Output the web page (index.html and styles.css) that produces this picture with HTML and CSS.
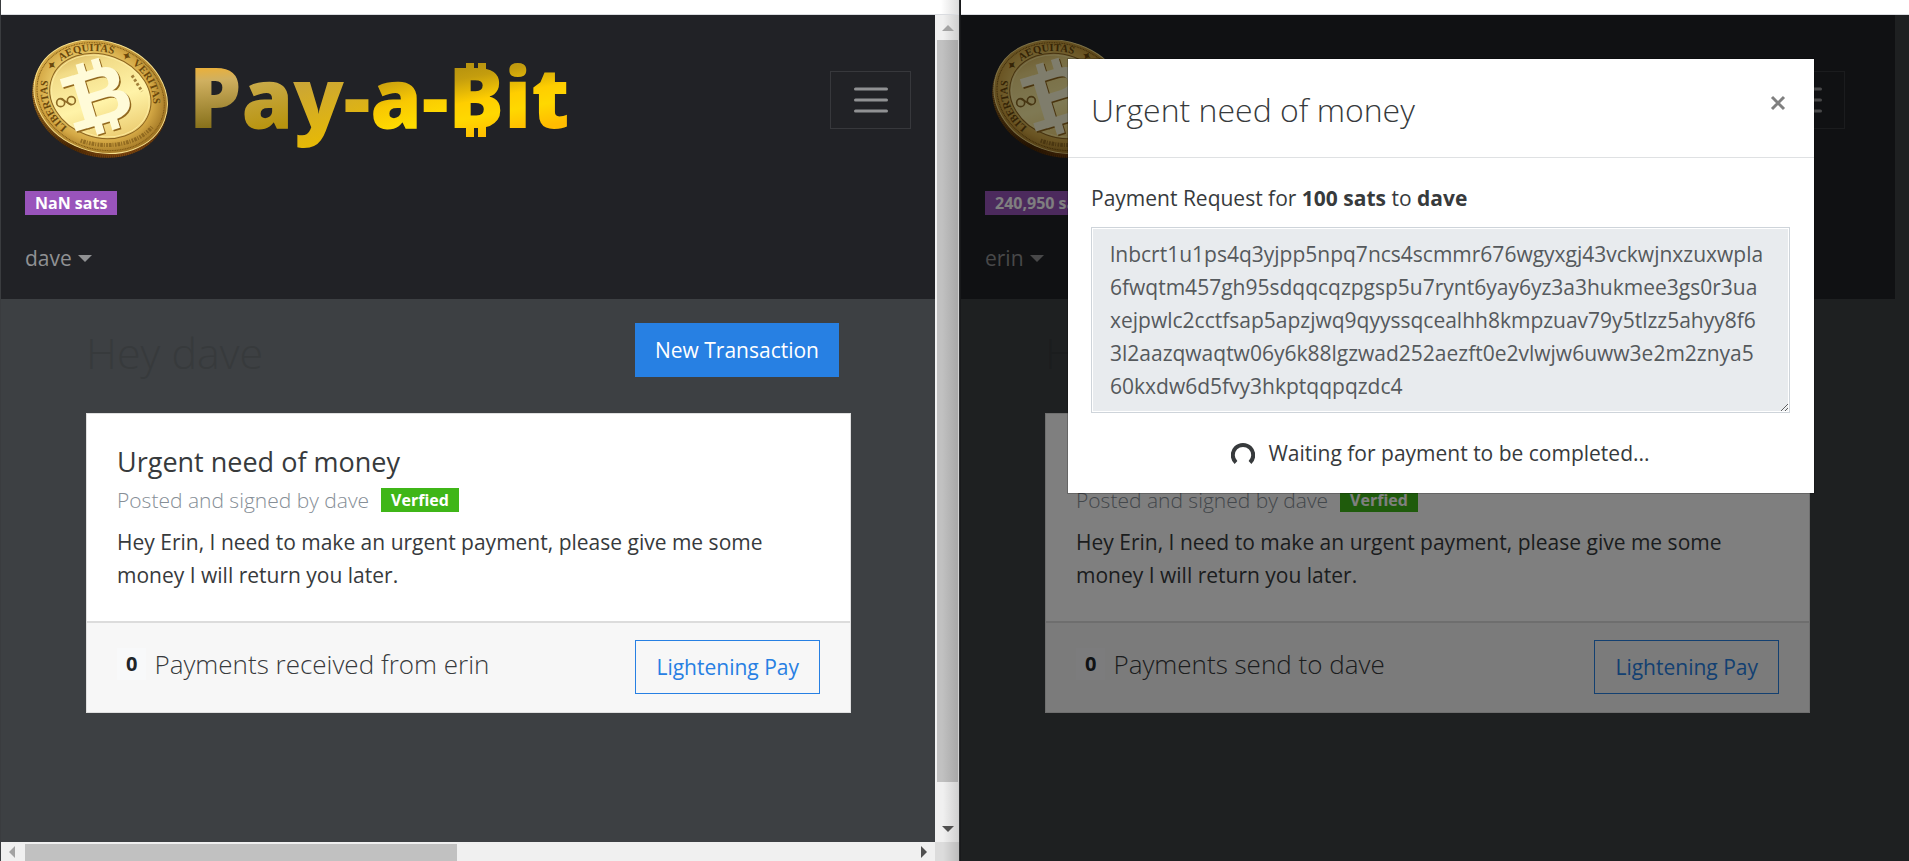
FILE: index.html
```html
<!DOCTYPE html>
<html lang="en">
<head>
<meta charset="utf-8">
<title>Pay-a-Bit</title>
<link rel="stylesheet" href="styles.css">
</head>
<body>
<svg class="defs" width="0" height="0" aria-hidden="true">
  <defs>
    <radialGradient id="face" cx="45%" cy="48%" r="58%">
      <stop offset="0" stop-color="#fff6b4"/>
      <stop offset=".45" stop-color="#f3d878"/>
      <stop offset=".75" stop-color="#d3a744"/>
      <stop offset="1" stop-color="#94691c"/>
    </radialGradient>
    <linearGradient id="inner" x1="0" y1="0" x2="1" y2="1">
      <stop offset="0" stop-color="#c79b3c"/>
      <stop offset=".25" stop-color="#f2dc88"/>
      <stop offset=".55" stop-color="#fff3a8"/>
      <stop offset="1" stop-color="#e3bb58"/>
    </linearGradient>
    <linearGradient id="edge" x1="0" y1="0" x2="1" y2="1">
      <stop offset="0" stop-color="#f4dd84"/>
      <stop offset=".35" stop-color="#a87423"/>
      <stop offset=".7" stop-color="#4a2703"/>
      <stop offset="1" stop-color="#b3661a"/>
    </linearGradient>
    <linearGradient id="gold-p" gradientUnits="userSpaceOnUse" x1="0" y1="20" x2="4" y2="80">
      <stop offset="0" stop-color="#e9b03c"/>
      <stop offset=".2" stop-color="#d0b060"/>
      <stop offset="1" stop-color="#86701a"/>
    </linearGradient>
    <linearGradient id="gold-a" gradientUnits="userSpaceOnUse" x1="60" y1="34" x2="70" y2="80">
      <stop offset="0" stop-color="#c9aa48"/>
      <stop offset="1" stop-color="#b8940f"/>
    </linearGradient>
    <linearGradient id="gold-y" gradientUnits="userSpaceOnUse" x1="100" y1="30" x2="120" y2="96">
      <stop offset="0" stop-color="#c8a43a"/>
      <stop offset="1" stop-color="#e6b906"/>
    </linearGradient>
    <linearGradient id="gold-mid" gradientUnits="userSpaceOnUse" x1="190" y1="32" x2="204" y2="80">
      <stop offset="0" stop-color="#c9a010"/>
      <stop offset=".5" stop-color="#f8c802"/>
      <stop offset="1" stop-color="#ffdc00"/>
    </linearGradient>
    <linearGradient id="gold-bit" gradientUnits="userSpaceOnUse" x1="300" y1="12" x2="314" y2="84">
      <stop offset="0" stop-color="#b8940f"/>
      <stop offset=".15" stop-color="#c49d0e"/>
      <stop offset=".48" stop-color="#ffce00"/>
      <stop offset=".7" stop-color="#ffd800"/>
      <stop offset="1" stop-color="#ffbc00"/>
    </linearGradient>
    <path id="ring" d="M147 295 A162 131 20 1 1 393 253"/>
    <symbol id="coin" viewBox="33 30 414 354">
      <ellipse cx="240" cy="207" rx="207" ry="172" transform="rotate(20 240 207)" fill="url(#edge)"/>
      <ellipse cx="240" cy="207" rx="204" ry="169" transform="rotate(20 240 207)" fill="none" stroke="#2f1a04" stroke-opacity=".5" stroke-width="7" stroke-dasharray="2 4"/>
      <ellipse cx="242" cy="200" rx="204" ry="165" transform="rotate(20 242 200)" fill="url(#face)" stroke="#f5df8c" stroke-width="3"/>
      <ellipse cx="242" cy="200" rx="195" ry="157" transform="rotate(20 242 200)" fill="none" stroke="#7a5512" stroke-width="3" stroke-dasharray="3 2"/>
      <ellipse cx="241" cy="198" rx="155" ry="124" transform="rotate(20 241 198)" fill="url(#inner)" stroke="#8b6420" stroke-width="3"/>
      <ellipse cx="241" cy="198" rx="150" ry="119" transform="rotate(20 241 198)" fill="none" stroke="#fff0a8" stroke-width="2"/>
      <text class="ring-text"><textPath href="#ring" startOffset="1%">LIBERTAS</textPath></text>
      <text class="ring-text"><textPath href="#ring" startOffset="31%">✦</textPath></text>
      <text class="ring-text"><textPath href="#ring" startOffset="37%">AEQUITAS</textPath></text>
      <text class="ring-text"><textPath href="#ring" startOffset="67%">✦</textPath></text>
      <text class="ring-text"><textPath href="#ring" startOffset="73%">VERITAS</textPath></text>
      <path d="M182 332 C250 356 350 350 398 288" fill="none" stroke="#7a5414" stroke-width="12" stroke-dasharray="5 3 8 3 3 4" stroke-opacity=".65"/>
      <path d="M336 136 L366 184" fill="none" stroke="#8b6420" stroke-width="9" stroke-dasharray="8 6" stroke-opacity=".8"/>
      <g fill="none" stroke="#8f6c26" stroke-width="5">
        <circle cx="122" cy="218" r="12"/><circle cx="154" cy="212" r="12"/><path d="M122 206 L154 224"/>
      </g>
      <g transform="translate(243 196) rotate(-17)">
        <g class="mark-shadow" transform="translate(3 5)">
          <text class="mark" x="-84" y="82">B</text>
          <path d="M-104 -82h40v26h-40zM-104 56h40v26h-40zM-46 -110h24v32h-24zM2 -110h24v32H2zM-46 78h24v32h-24zM2 78h24v32H2z"/>
        </g>
        <g class="mark-face">
          <text class="mark" x="-84" y="82">B</text>
          <path d="M-104 -82h40v26h-40zM-104 56h40v26h-40zM-46 -110h24v32h-24zM2 -110h24v32H2zM-46 78h24v32h-24zM2 78h24v32H2z"/>
        </g>
      </g>
    </symbol>
    <symbol id="wordmark" viewBox="0 0 374 100">
      <text class="word" x="-6" y="79"><tspan fill="url(#gold-p)">P</tspan><tspan fill="url(#gold-a)">a</tspan><tspan fill="url(#gold-y)">y-</tspan><tspan fill="url(#gold-mid)">a-</tspan><tspan fill="url(#gold-bit)">Bit</tspan></text>
      <path fill="url(#gold-bit)" d="M271 14h8v10h-8zM283 14h8v10h-8zM271 77h8v11h-8zM283 77h8v11h-8z"/>
    </symbol>
  </defs>
</svg>

<main class="desktop">
  <section class="window window-left">
    <div class="strip"></div>
    <div class="view">
      <header class="navbar">
        <div class="navbar-top">
          <a class="brand" href="#" aria-label="Pay-a-Bit">
            <svg class="coin"><use href="#coin"/></svg>
            <svg class="wordmark"><use href="#wordmark"/></svg>
          </a>
          <button class="toggler" type="button" aria-label="Toggle navigation">
            <svg viewBox="0 0 34 34"><path d="M1.500 6h31M1.500 17h31M1.500 28h31"/></svg>
          </button>
        </div>
        <div class="balance"><span class="badge badge-purple">NaN sats</span></div>
        <a class="user" href="#">dave<span class="caret"></span></a>
      </header>
      <div class="container">
        <div class="heading">
          <h1>Hey dave</h1>
          <button class="btn btn-primary" type="button">New Transaction</button>
        </div>
        <article class="card">
          <div class="card-body">
            <h4>Urgent need of money</h4>
            <div class="byline"><span>Posted and signed by dave</span><span class="badge badge-green">Verfied</span></div>
            <p>Hey Erin, I need to make an urgent payment, please give me some money I will return you later.</p>
          </div>
          <div class="card-footer">
            <div class="count"><span class="count-badge">0</span><span>Payments received from erin</span></div>
            <button class="btn btn-outline" type="button">Lightening Pay</button>
          </div>
        </article>
      </div>
    </div>
    <div class="vbar"><i class="up"></i><i class="vthumb"></i><i class="vspace"></i><i class="down"></i></div>
    <div class="hbar"><i class="left"></i><i class="hthumb"></i><i class="hspace"></i><i class="right"></i></div>
    <div class="corner"></div>
  </section>

  <section class="window window-right">
    <div class="strip"></div>
    <div class="view">
      <header class="navbar">
        <div class="navbar-top">
          <a class="brand" href="#" aria-label="Pay-a-Bit">
            <svg class="coin"><use href="#coin"/></svg>
          </a>
          <button class="toggler" type="button" aria-label="Toggle navigation">
            <svg viewBox="0 0 34 34"><path d="M1.500 6h31M1.500 17h31M1.500 28h31"/></svg>
          </button>
        </div>
        <div class="balance"><span class="badge badge-purple">240,950 sats</span></div>
        <a class="user" href="#">erin<span class="caret"></span></a>
      </header>
      <div class="container">
        <div class="heading">
          <h1>Hey erin</h1>
          <button class="btn btn-primary" type="button">New Transaction</button>
        </div>
        <article class="card">
          <div class="card-body">
            <h4>Urgent need of money</h4>
            <div class="byline"><span>Posted and signed by dave</span><span class="badge badge-green">Verfied</span></div>
            <p>Hey Erin, I need to make an urgent payment, please give me some money I will return you later.</p>
          </div>
          <div class="card-footer">
            <div class="count"><span class="count-badge">0</span><span>Payments send to dave</span></div>
            <button class="btn btn-outline" type="button">Lightening Pay</button>
          </div>
        </article>
      </div>
      <div class="backdrop">
        <div class="modal" role="dialog" aria-labelledby="modal-title">
          <div class="modal-header">
            <h3 id="modal-title">Urgent need of money</h3>
            <button class="close" type="button" aria-label="Close"><svg viewBox="0 0 16 16"><path d="M2 2l12 12M14 2L2 14"/></svg></button>
          </div>
          <div class="modal-body">
            <label for="invoice">Payment Request for <b>100 sats</b> to <b>dave</b></label>
            <textarea id="invoice" rows="5" readonly>lnbcrt1u1ps4q3yjpp5npq7ncs4scmmr676wgyxgj43vckwjnxzuxwpla
6fwqtm457gh95sdqqcqzpgsp5u7rynt6yay6yz3a3hukmee3gs0r3ua
xejpwlc2cctfsap5apzjwq9qyyssqcealhh8kmpzuav79y5tlzz5ahyy8f6
3l2aazqwaqtw06y6k88lgzwad252aezft0e2vlwjw6uww3e2m2znya5
60kxdw6d5fvy3hkptqqpqzdc4</textarea>
            <div class="waiting">
              <svg class="spinner" viewBox="0 0 24 24"><path d="M5 20.500A10.200 10.200 0 1 1 19 20.500"/></svg>
              <span>Waiting for payment to be completed...</span>
            </div>
          </div>
        </div>
      </div>
    </div>
  </section>
</main>
</body>
</html>
```
FILE: styles.css
```css
* { box-sizing: border-box; }
body {
  margin: 0;
  background: #3d4043;
  color: #373a3c;
  font: 400 21px/33px "Open Sans", "Noto Sans", sans-serif;
}
h1, h3, h4, p { margin: 0; font-weight: 300; }
button, textarea { font: inherit; border-radius: 0; margin: 0; }
a { text-decoration: none; }
.defs { position: absolute; }

.desktop {
  display: grid;
  grid-template-columns: 960fr 949fr;
  min-height: 100vh;
}
.window { display: grid; background: #3d4043; min-width: 0; }
.window-left {
  grid-template: 15px 1fr 19px / 1fr 24px;
  border-left: 1px solid #3a3c3f;
  border-right: 1px solid #2a2c2e;
}
.window-right {
  grid-template: 15px 1fr / 1fr;
  border-left: 1px solid #18191b;
}
.strip {
  grid-column: 1 / -1;
  background: #fff;
  border-bottom: 1px solid #dadce0;
}
.window-left .strip {
  background: linear-gradient(to left, #dcdcdc, #fff 18px);
}
.view { position: relative; min-width: 0; }
.window-right .navbar, .window-right .container { margin-right: 14px; }

.navbar { height: 284px; padding: 25px 24px 0; background: #212226; }
.navbar-top { display: flex; justify-content: space-between; align-items: center; padding-left: 6px; }
.window-right .navbar { padding-right: 50px; }
.brand { display: flex; gap: 26px; }
.coin { width: 138px; height: 118px; }
.wordmark { width: 374px; height: 100px; align-self: center; }
.word { font: 800 83px "Open Sans", sans-serif; }
.ring-text { font: 700 32px "Liberation Serif", serif; fill: #6b490c; }
.mark { font: 700 238px "Liberation Sans", sans-serif; }
.mark-shadow { fill: #93691f; }
.mark-face { fill: #fffbd8; }
.toggler {
  width: 81px;
  height: 58px;
  display: grid;
  place-items: center;
  margin-top: 2px;
  padding: 0;
  background: none;
  border: 1px solid #37383c;
}
.toggler svg { width: 34px; height: 34px; stroke: #909193; stroke-width: 3; stroke-linecap: round; }
.badge {
  display: inline-block;
  padding: 0 10px;
  color: #fff;
  font-size: 16px;
  font-weight: 700;
  line-height: 24px;
}
.badge-purple { background: #9954bb; }
.badge-green { background: #3fb618; }
.balance { display: flex; margin-top: 33px; }
.user { display: inline-flex; align-items: center; gap: 6px; margin-top: 27px; color: #909193; }
.caret { border: 7px solid transparent; border-top-color: currentColor; border-bottom: 0; }

.container { padding: 24px 84px 0 85px; }
.window-right .container { padding: 24px 85px 0 84px; }
.heading { display: flex; justify-content: space-between; align-items: flex-start; height: 90px; padding-right: 12px; }
h1 { font-size: 43px; line-height: 60px; color: #373a3c; }
.btn { height: 54px; padding: 0 19px; border: 1px solid #2780e3; white-space: nowrap; }
.btn-primary { background: #2780e3; color: #fff; }
.btn-outline { padding: 0 20px; background: transparent; color: #2780e3; }
.card { border: 1px solid #dfdfdf; background: #fff; }
.card-body { padding: 31px 30px 29px; }
h4 { font-size: 27px; line-height: 34px; font-weight: 400; }
.byline { display: flex; align-items: center; gap: 12px; height: 42px; font-weight: 300; color: #868e96; }
.card p { margin-top: 5px; font-weight: 400; }
.card-footer {
  display: flex;
  justify-content: space-between;
  align-items: center;
  padding: 17px 30px 18px;
  background: #f7f7f7;
  border-top: 2px solid #dcdcdc;
}
.count { display: flex; align-items: center; gap: 8px; margin-bottom: 6px; font-size: 26px; font-weight: 300; }
.count-badge {
  padding: 0 9px;
  background: #f8f9fa;
  color: #212529;
  font-size: 20px;
  font-weight: 700;
  line-height: 32px;
}

.vbar, .hbar { display: flex; background: #f0f0f0; }
.vbar {
  grid-area: 2 / 2;
  flex-direction: column;
  align-items: center;
  padding: 10px 1px 10px 2px;
  background: linear-gradient(to left, #cfcfcf, #f0f0f0 16px);
}
.hbar { grid-area: 3 / 1; align-items: center; padding: 0 8px; }
.corner { grid-area: 3 / 2; background: linear-gradient(to left, #bcbcbc, #dcdcdc 16px); }
.up { border: 6px solid transparent; border-bottom-color: #a3a3a3; border-top: 0; }
.down { border: 6px solid transparent; border-top-color: #505050; border-bottom: 0; }
.left { border: 6px solid transparent; border-right-color: #a3a3a3; border-left: 0; }
.right { border: 6px solid transparent; border-left-color: #505050; border-right: 0; }
.vthumb { flex: 742; width: 100%; margin-top: 9px; background: linear-gradient(to left, #a8a8a8, #c1c1c1 16px); }
.vspace { flex: 44; }
.hthumb { flex: 430; align-self: stretch; margin: 2px 0 0 10px; background: #c1c1c1; }
.hspace { flex: 462; }

.backdrop {
  position: absolute;
  inset: 0;
  padding: 44px 95px 0 107px;
  background: rgba(0, 0, 0, .5);
}
.modal { background: #fff; box-shadow: 0 0 0 1px rgba(0, 0, 0, .2); }
.modal-header {
  display: flex;
  justify-content: space-between;
  align-items: flex-start;
  height: 99px;
  padding: 28px 28px 0 23px;
  border-bottom: 1px solid #dfe1e3;
}
h3 { font-size: 32px; line-height: 46px; }
.close { width: 16px; height: 16px; margin-top: 8px; padding: 0; border: 0; background: none; display: grid; }
.close svg { stroke: #808080; stroke-width: 3; fill: none; }
.modal-body { padding: 24px 24px 23px 23px; }
label { display: block; margin-bottom: 12px; }
textarea {
  display: block;
  width: 100%;
  height: 186px;
  padding: 10px 18px;
  border: 1px solid #ced4da;
  background: #e8ebee;
  color: #55595c;
  overflow: hidden;
  box-shadow: inset 0 0 0 1px #fff;
}
.waiting { display: flex; justify-content: center; align-items: center; gap: 13px; margin-top: 24px; }
.spinner { width: 24px; height: 24px; fill: none; stroke: #373a3c; stroke-width: 4; }
```
